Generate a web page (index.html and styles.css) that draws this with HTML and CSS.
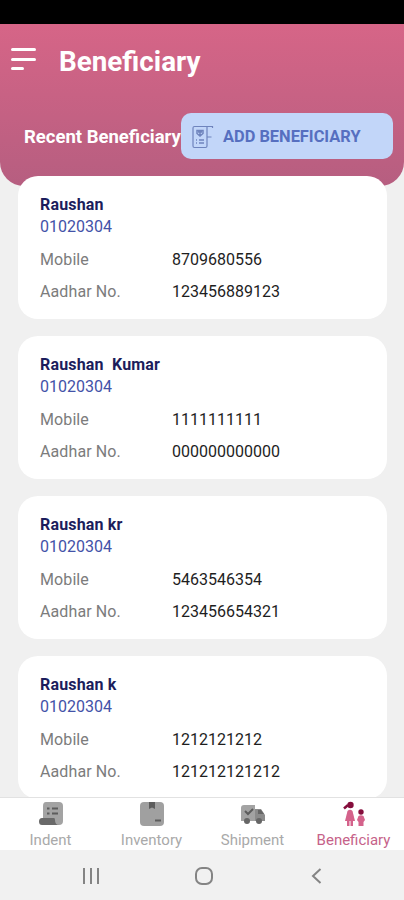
FILE: index.html
```
<!DOCTYPE html>
<html lang="en">
	<head>
		<meta charset="UTF-8" />
		<meta name="viewport" content="width=device-width, initial-scale=1.0" />
		<title>Beneficiary</title>
		<link rel="stylesheet" href="styles.css">
	</head>
	<body>
		<div class="phone">
			<div class="status-bar"></div>

			<main class="content">
				<header class="header">
					<div class="title-row">
						<div class="menu"><span></span><span></span><span class="short"></span></div>
						<h1>Beneficiary</h1>
					</div>
					<div class="recent-row">
						<h2>Recent Beneficiary</h2>
						<button class="add-btn">
							<svg width="22" height="24" viewBox="0 0 22 24" fill="none" stroke="#6f84bd" stroke-width="1.200">
								<path d="M15.500 1.500H2.500Q1 1.500 1 3V21Q1 22.500 2.500 22.500H13.500Q15 22.500 15 21V1.500H20.500V3M15 12H19.500" />
								<path d="M5 5.500H11V8.500L8 11L5 8.500ZM6 7H10M8 5V10" stroke-width="1.500" />
								<path d="M4 15H5M7 15H12M4 18H5M7 18H12" stroke-width="1.500" />
							</svg>
							<span>ADD BENEFICIARY</span>
						</button>
					</div>
				</header>

				<section class="list">
					<article class="card">
						<h3>Raushan</h3>
						<p class="code">01020304</p>
						<dl>
							<dt>Mobile</dt><dd>8709680556</dd>
							<dt>Aadhar No.</dt><dd>123456889123</dd>
						</dl>
					</article>
					<article class="card">
						<h3>Raushan  Kumar</h3>
						<p class="code">01020304</p>
						<dl>
							<dt>Mobile</dt><dd>1111111111</dd>
							<dt>Aadhar No.</dt><dd>000000000000</dd>
						</dl>
					</article>
					<article class="card">
						<h3>Raushan kr</h3>
						<p class="code">01020304</p>
						<dl>
							<dt>Mobile</dt><dd>5463546354</dd>
							<dt>Aadhar No.</dt><dd>123456654321</dd>
						</dl>
					</article>
					<article class="card">
						<h3>Raushan k</h3>
						<p class="code">01020304</p>
						<dl>
							<dt>Mobile</dt><dd>1212121212</dd>
							<dt>Aadhar No.</dt><dd>121212121212</dd>
						</dl>
					</article>
				</section>
			</main>

			<nav class="tabs">
				<a class="tab">
					<svg width="26" height="26" viewBox="0 0 26 26">
						<path d="M8 1H21Q25 1 25 5V20Q25 24 21 24H5V5Q5 1 8 1Z" fill="#a3a3a3" />
						<path d="M9 7.500H11.500M14 7.500H20M9 12.500H11.500M14 12.500H20" stroke="#5c5c5c" stroke-width="2" />
						<path d="M4 17H16Q17 17 17 19Q17 24 21 24H4Q1 24 1 20.500Q1 17 4 17Z" fill="#696969" />
					</svg>
					<span>Indent</span>
				</a>
				<a class="tab">
					<svg width="26" height="26" viewBox="0 0 26 26">
						<rect x="1" y="1" width="24" height="24" rx="4" fill="#a0a0a0" />
						<path d="M10 1H16V8L13 6.500L10 8Z" fill="#5c5c5c" />
						<path d="M16 19.500H22" stroke="#5c5c5c" stroke-width="2" />
					</svg>
					<span>Inventory</span>
				</a>
				<a class="tab">
					<svg width="26" height="26" viewBox="0 0 26 26">
						<path d="M4 4H15V20H1V7Q1 4 4 4Z" fill="#a3a3a3" />
						<path d="M15 8H21L25 14V20H15Z" fill="#8b8b8b" />
						<path d="M5 10L8 13L13 8" fill="none" stroke="#5c5c5c" stroke-width="2" />
						<path d="M18 9H21L24 13H18Z" fill="#666" />
						<circle cx="7" cy="20" r="3" fill="#666" />
						<circle cx="19" cy="20" r="3" fill="#666" />
					</svg>
					<span>Shipment</span>
				</a>
				<a class="tab active">
					<svg width="26" height="26" viewBox="0 0 26 26">
						<path d="M6.500 10Q9 7.500 11.500 10L14 20H12V25H9.500V20H8.500V25H6V20H4Z" fill="#d4628b" />
						<path d="M17.500 15Q20 13.500 22.500 15L24 19L22.500 21V25H17.500V21L16 19Z" fill="#d4628b" />
						<circle cx="9.500" cy="4" r="3.200" fill="#850d3c" />
						<path d="M7 4L3 7.500" stroke="#850d3c" stroke-width="2.500" />
						<circle cx="20" cy="11" r="2.700" fill="#850d3c" />
					</svg>
					<span>Beneficiary</span>
				</a>
			</nav>

			<div class="system-bar">
				<svg width="18" height="18" viewBox="0 0 18 18"><path d="M2 1V17M9 1V17M16 1V17" /></svg>
				<svg width="20" height="20" viewBox="0 0 20 20"><rect x="2" y="2" width="16" height="16" rx="6" /></svg>
				<svg width="18" height="18" viewBox="0 0 18 18"><path d="M12.500 2L5 9L12.500 16" /></svg>
			</div>
		</div>
	</body>
</html>
```
FILE: styles.css
```
body {
	margin: 0;
	font-family: Roboto, "Liberation Sans", sans-serif;
}

h1,
h2,
h3,
p,
dl,
dd {
	margin: 0;
}

.phone {
	height: 900px;
	display: flex;
	flex-direction: column;
	background-color: #f0f0f0;
	overflow: hidden;
}

.status-bar {
	height: 24px;
	flex-shrink: 0;
	background-color: #000;
}

.content {
	flex: 1;
	min-height: 0;
	overflow: hidden;
}

.header {
	height: 162px;
	box-sizing: border-box;
	padding: 19px 11px 0 11px;
	border-radius: 0 0 24px 24px;
	background: linear-gradient(#d66587, #b65e80);
	color: #fff;
}

.title-row {
	display: flex;
	align-items: center;
	height: 38px;
	gap: 23px;
}

.menu {
	display: flex;
	flex-direction: column;
	gap: 6.500px;
	width: 25px;
	margin-top: -6px;
}

.menu span {
	height: 3px;
	border-radius: 2px;
	background-color: #fff;
}

.menu .short {
	width: 13px;
}

h1 {
	font-size: 27.800px;
	line-height: 38px;
	font-weight: 700;
}

.recent-row {
	display: flex;
	align-items: center;
	justify-content: space-between;
	margin-top: 32px;
	padding-left: 13px;
}

h2 {
	padding-top: 2px;
	font-size: 18.500px;
	font-weight: 700;
	white-space: nowrap;
}

.add-btn {
	display: flex;
	align-items: center;
	gap: 9px;
	width: 212px;
	height: 46px;
	padding: 1px 0 0 11px;
	border: 0;
	border-radius: 10px;
	background-color: #c2d6f9;
	color: #566fc0;
	font-family: inherit;
	font-size: 16.400px;
	font-weight: 700;
	white-space: nowrap;
}

.list {
	display: flex;
	flex-direction: column;
	gap: 17px;
	margin: -10px 17px 0 18px;
}

.card {
	height: 143px;
	box-sizing: border-box;
	padding: 18px 22px 0;
	border-radius: 20px;
	background-color: #fff;
}

h3 {
	font-size: 16px;
	line-height: 22px;
	font-weight: 700;
	letter-spacing: 0.170px;
	color: #1c1d5c;
	white-space: pre;
}

.code {
	font-size: 16px;
	line-height: 22px;
	color: #4352a8;
}

dl {
	display: grid;
	grid-template-columns: 132px 1fr;
	row-gap: 10px;
	margin-top: 11px;
	font-size: 16px;
	line-height: 22px;
}

dt {
	letter-spacing: 0.100px;
	color: #7c7c7c;
}

dd {
	color: #1e1e1e;
}

.tabs {
	display: flex;
	flex-shrink: 0;
	height: 53px;
	box-sizing: border-box;
	border-top: 1px solid #e2e2e2;
	background-color: #fff;
}

.tab {
	flex: 1;
	display: flex;
	flex-direction: column;
	align-items: center;
	padding-top: 3px;
	color: #a9a9a9;
	font-size: 15px;
	line-height: 20px;
}

.tab svg {
	flex-shrink: 0;
}

.tab span {
	margin-top: 3px;
}

.tab.active {
	color: #c66289;
}

.system-bar {
	display: flex;
	align-items: center;
	justify-content: space-between;
	flex-shrink: 0;
	height: 50px;
	box-sizing: border-box;
	padding: 2px 78px 0 82px;
	background-color: #f1f1f1;
}

.system-bar svg {
	fill: none;
	stroke: #848484;
	stroke-width: 2;
}
```
